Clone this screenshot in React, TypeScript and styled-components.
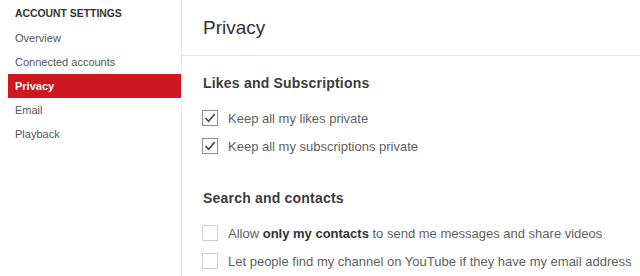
import React from "react";
import styled, { createGlobalStyle } from "styled-components";

const GlobalStyle = createGlobalStyle`
  html, body {
    margin: 0;
    padding: 0;
    background: #fff;
    font-family: "Liberation Sans", Arial, sans-serif;
  }
`;

type Option = { label: React.ReactNode; checked: boolean };

const sections: { title: string; options: Option[] }[] = [
  {
    title: "Likes and Subscriptions",
    options: [
      { label: "Keep all my likes private", checked: true },
      { label: "Keep all my subscriptions private", checked: true },
    ],
  },
  {
    title: "Search and contacts",
    options: [
      {
        label: (
          <>
            Allow <b>only my contacts</b> to send me messages and share videos
          </>
        ),
        checked: false,
      },
      {
        label: "Let people find my channel on YouTube if they have my email address",
        checked: false,
      },
    ],
  },
];

const navItems = ["Overview", "Connected accounts", "Privacy", "Email", "Playback"];

const App: React.FC = () => {
  return (
    <>
      <GlobalStyle />
      <Page>
        <Sidebar>
          <SideTitle>ACCOUNT SETTINGS</SideTitle>
          {navItems.map((item) => (
            <NavItem key={item} $active={item === "Privacy"}>
              {item}
            </NavItem>
          ))}
        </Sidebar>
        <Main>
          <Header>
            <Heading>Privacy</Heading>
          </Header>
          <Content>
            {sections.map((s) => (
              <Section key={s.title}>
                <SectionTitle>{s.title}</SectionTitle>
                <OptionList>
                  {s.options.map((o, i) => (
                    <Row key={i}>
                      <Box $checked={o.checked}>
                        {o.checked && (
                          <svg width="14" height="14" viewBox="0 0 14 14">
                            <polyline
                              points="2.5,7 5.6,10.2 11.8,3"
                              fill="none"
                              stroke="#444"
                              strokeWidth="1.6"
                            />
                          </svg>
                        )}
                      </Box>
                      <Label>{o.label}</Label>
                    </Row>
                  ))}
                </OptionList>
              </Section>
            ))}
          </Content>
        </Main>
      </Page>
    </>
  );
};

const Page = styled.div`
  display: flex;
  width: 640px;
  height: 276px;
  overflow: hidden;
`;

const Sidebar = styled.nav`
  width: 181px;
  flex-shrink: 0;
  border-right: 1px solid #e6e6e6;
  padding-top: 2px;
  display: flex;
  flex-direction: column;
`;

const SideTitle = styled.div`
  height: 24px;
  line-height: 24px;
  padding-left: 15px;
  font-size: 10.4px;
  font-weight: bold;
  color: #333;
`;

const NavItem = styled.div<{ $active?: boolean }>`
  height: 24px;
  line-height: 24px;
  margin-left: 8px;
  padding-left: 7px;
  font-size: 11px;
  color: ${(p) => (p.$active ? "#fff" : "#555")};
  font-weight: ${(p) => (p.$active ? "bold" : "normal")};
  background: ${(p) => (p.$active ? "#cc181e" : "transparent")};
`;

const Main = styled.main`
  flex: 1;
  display: flex;
  flex-direction: column;
`;

const Header = styled.div`
  height: 55px;
  border-bottom: 1px solid #e3e3e3;
  display: flex;
  align-items: center;
  padding-left: 21px;
`;

const Heading = styled.h1`
  margin: 0;
  font-size: 19px;
  font-weight: normal;
  color: #333;
`;

const Content = styled.div`
  padding: 18px 0 0 20px;
  display: flex;
  flex-direction: column;
  gap: 29px;
`;

const Section = styled.section`
  display: flex;
  flex-direction: column;
  gap: 12px;
`;

const SectionTitle = styled.h2`
  margin: 0 0 0 1px;
  height: 18px;
  line-height: 18px;
  font-size: 14px;
  font-weight: bold;
  color: #3c3c3c;
  letter-spacing: 0.2px;
`;

const OptionList = styled.div`
  display: flex;
  flex-direction: column;
`;

const Row = styled.label`
  height: 28px;
  display: flex;
  align-items: center;
  gap: 10px;
`;

const Box = styled.span<{ $checked: boolean }>`
  width: 14px;
  height: 14px;
  border: 1px solid ${(p) => (p.$checked ? "#8e8e8e" : "#cfcfcf")};
  display: flex;
  align-items: center;
  justify-content: center;
  background: #fff;
`;

const Label = styled.span`
  font-size: 13px;
  color: #5f5f5f;
  white-space: nowrap;

  b {
    color: #333;
  }
`;

export default App;
